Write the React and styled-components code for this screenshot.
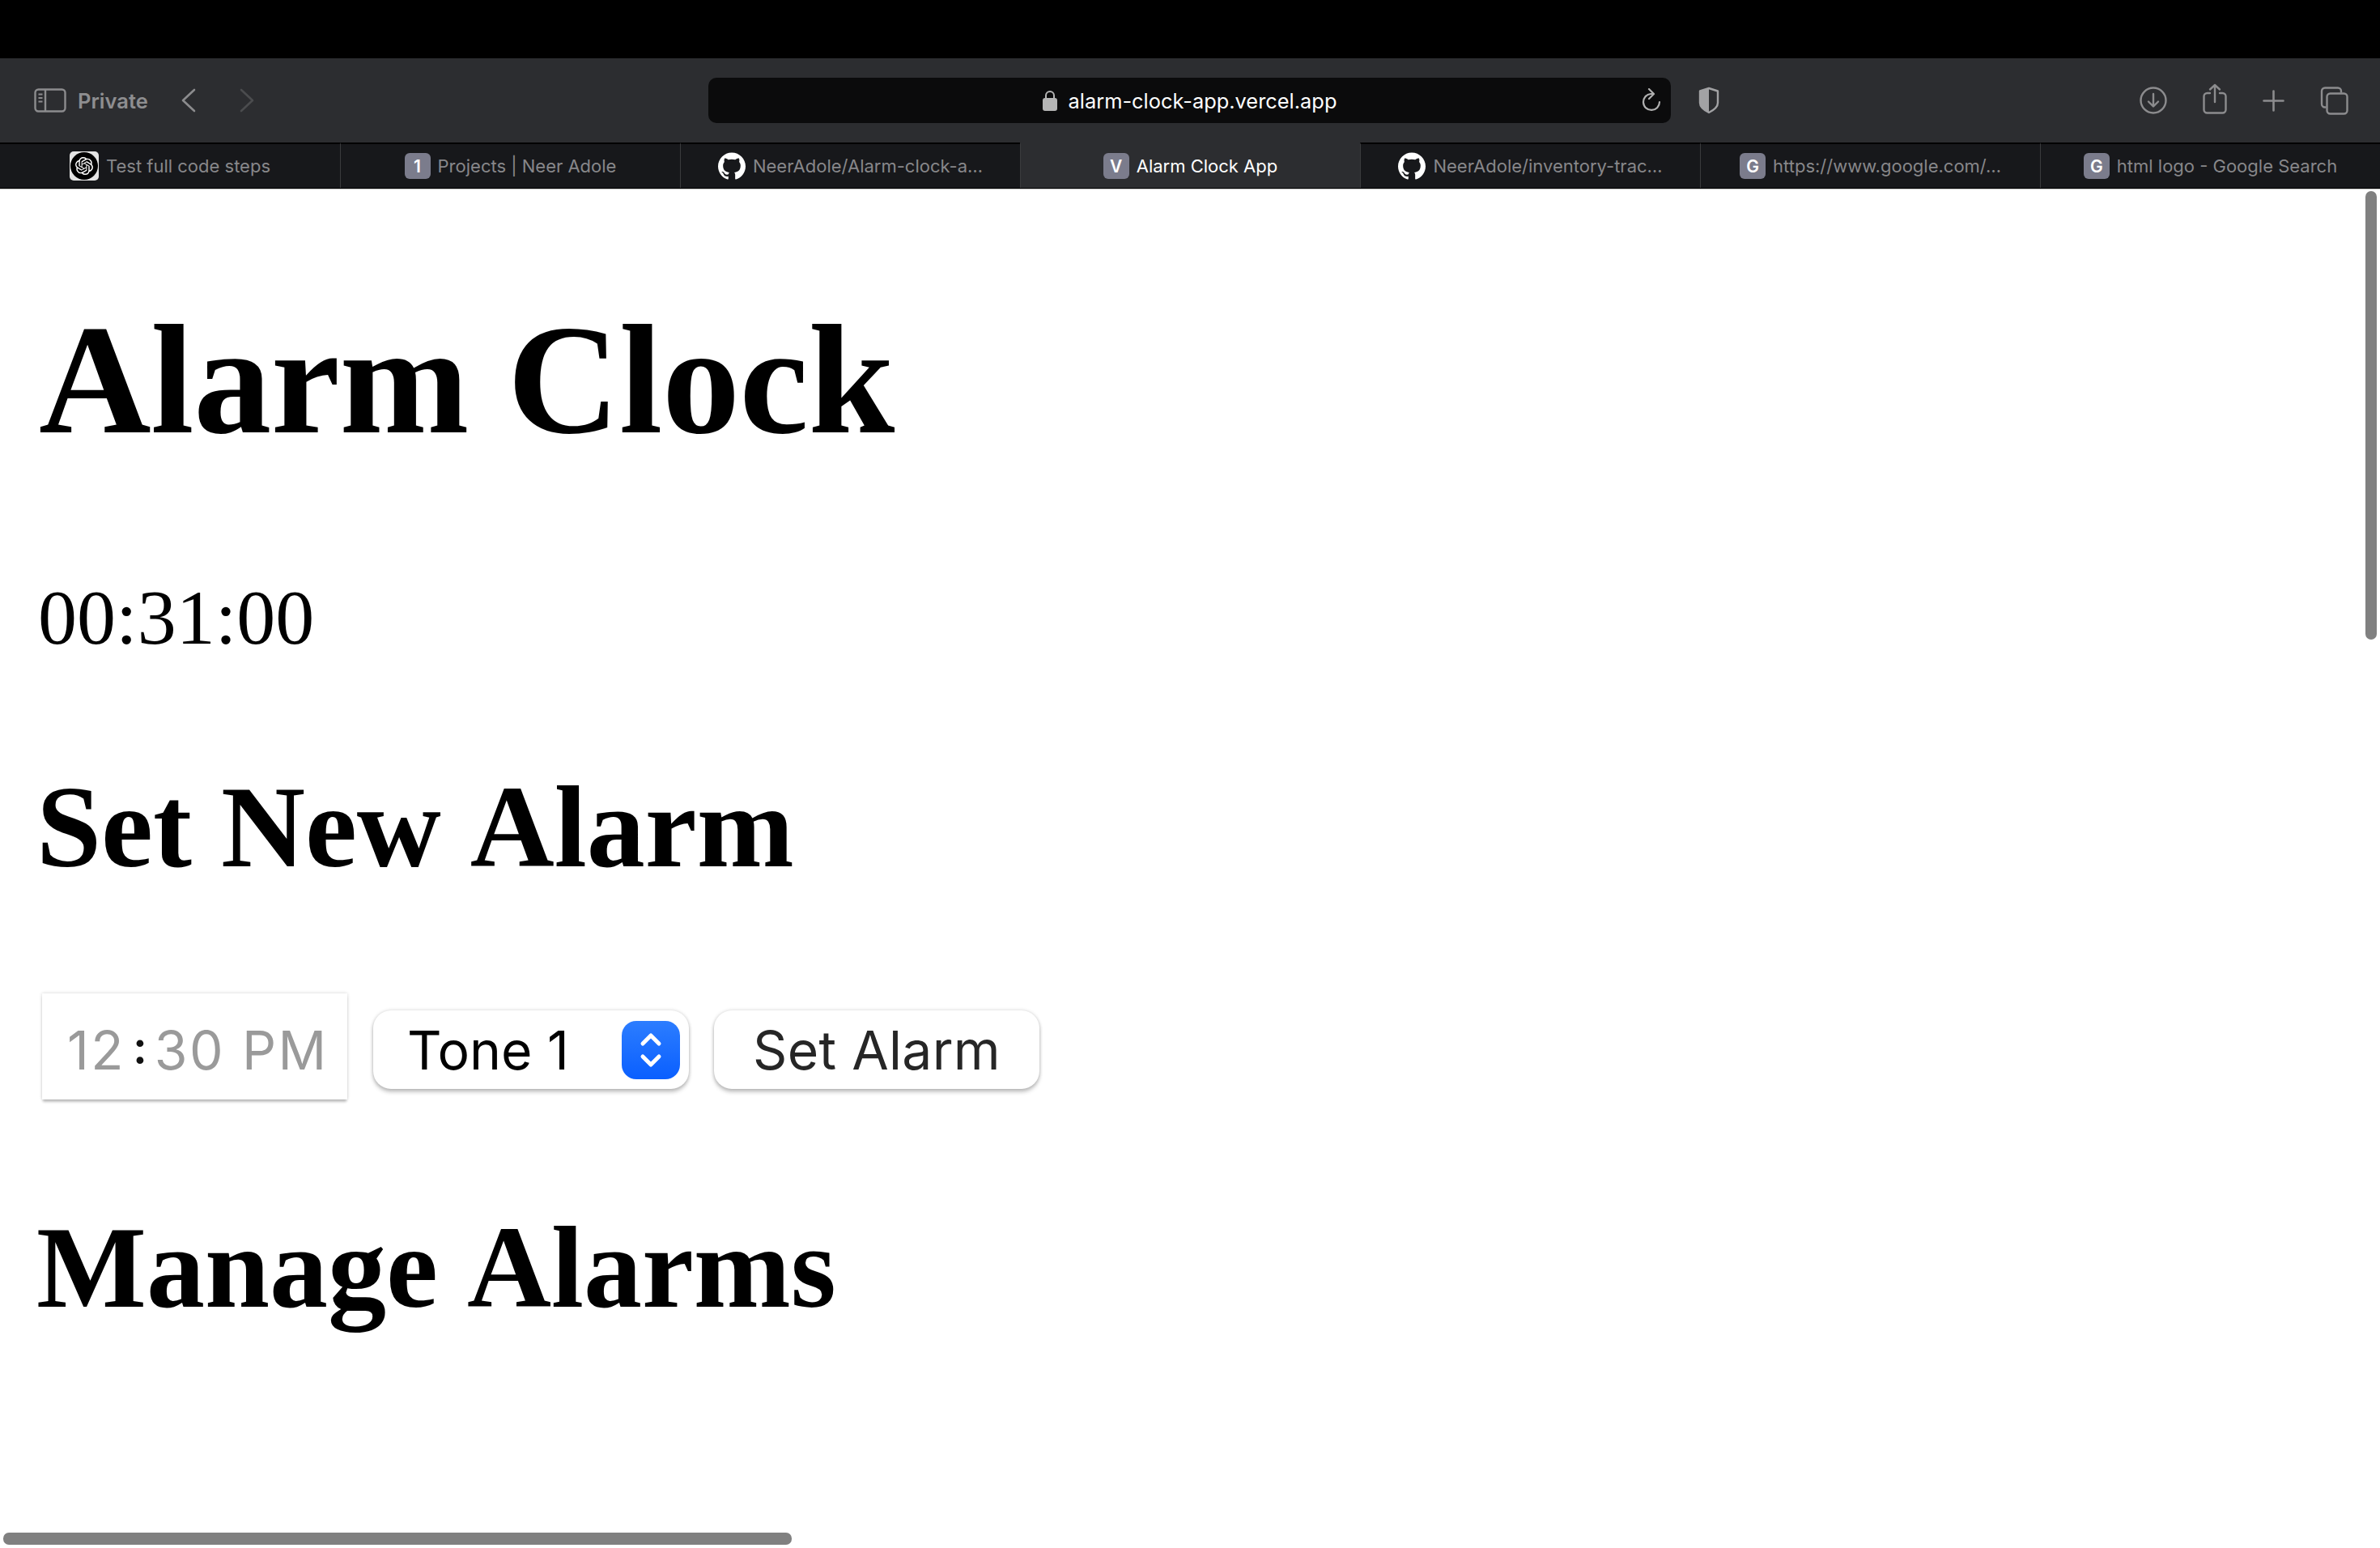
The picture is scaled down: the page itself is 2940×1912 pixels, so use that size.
import React from "react";
import styled, { createGlobalStyle } from "styled-components";
import { SiGithub, SiOpenai } from "react-icons/si";

const GlobalStyle = createGlobalStyle`
  html, body {
    margin: 0;
    padding: 0;
    background: #fff;
    overflow: hidden;
  }
`;

const tabs = [
  { title: "Test full code steps", icon: "openai" },
  { title: "Projects | Neer Adole", icon: "1" },
  { title: "NeerAdole/Alarm-clock-a…", icon: "github" },
  { title: "Alarm Clock App", icon: "V", active: true },
  { title: "NeerAdole/inventory-trac…", icon: "github" },
  { title: "https://www.google.com/…", icon: "G" },
  { title: "html logo - Google Search", icon: "G" }
];

function TabIcon({ icon }) {
  if (icon === "openai") {
    return (
      <OpenAiTile>
        <OpenAiDisc>
          <SiOpenai size={22} color="#fff" />
        </OpenAiDisc>
      </OpenAiTile>
    );
  }
  if (icon === "github") {
    return <SiGithub size={34} color="#fff" />;
  }
  return <LetterTile>{icon}</LetterTile>;
}

export default function App() {
  return (
    <Page>
      <GlobalStyle />
      <TopBar />
      <Toolbar>
        <LeftGroup>
          <svg width="40" height="30" viewBox="0 0 40 30" fill="none" stroke="#8c8c8e" strokeWidth="2.4">
            <rect x="1.5" y="1.5" width="37" height="27" rx="4" />
            <path d="M14 2v26" />
            <path d="M5.5 7.5h5M5.5 12h5M5.5 16.5h5" strokeWidth="2" />
          </svg>
          <PrivateLabel>Private</PrivateLabel>
          <NavIcon>
            <svg width="18" height="30" viewBox="0 0 18 30" fill="none" stroke="#8c8c8e" strokeWidth="2.6" strokeLinecap="round" strokeLinejoin="round">
              <path d="M16 2 2 15l14 13" />
            </svg>
          </NavIcon>
          <NavIcon>
            <svg width="18" height="30" viewBox="0 0 18 30" fill="none" stroke="#4b4c4e" strokeWidth="2.6" strokeLinecap="round" strokeLinejoin="round">
              <path d="m2 2 14 13L2 28" />
            </svg>
          </NavIcon>
        </LeftGroup>
        <UrlBar>
          <span />
          <UrlText>
            <svg width="18" height="26" viewBox="0 0 18 26">
              <path d="M4 11V7a5 5 0 0 1 10 0v4" fill="none" stroke="#b5b5b5" strokeWidth="2" />
              <rect x="0" y="10" width="18" height="16" rx="3" fill="#b5b5b5" />
            </svg>
            alarm-clock-app.vercel.app
          </UrlText>
          <ReloadIcon>
            <svg width="24" height="30" viewBox="0 0 24 30" fill="none" stroke="#b0b0b0" strokeWidth="2.2" strokeLinecap="round" strokeLinejoin="round">
              <path d="M13 7H11A10 10 0 1 0 22 17" />
              <path d="M9 1l6 6-6 6" />
            </svg>
          </ReloadIcon>
        </UrlBar>
        <ShieldIcon>
          <svg width="28" height="34" viewBox="0 0 28 34">
            <path d="M14 2 3 5.500V20c0 5 5 9 11 12 6-3 11-7 11-12V5.500z" fill="none" stroke="#a2a2a4" strokeWidth="2.4" strokeLinejoin="round" />
            <path d="M14 2 3 5.500V20c0 5 5 9 11 12z" fill="#a2a2a4" />
          </svg>
        </ShieldIcon>
        <RightGroup>
          <svg width="34" height="34" viewBox="0 0 34 34" fill="none" stroke="#8c8c8e" strokeWidth="2.4" strokeLinecap="round" strokeLinejoin="round">
            <circle cx="17" cy="17" r="15.500" />
            <path d="M17 9v15M11 18.500l6 6 6-6" />
          </svg>
          <ShareWrap>
            <svg width="30" height="38" viewBox="0 0 30 38" fill="none" stroke="#8c8c8e" strokeWidth="2.4" strokeLinecap="round" strokeLinejoin="round">
              <path d="M9 12H5.500a4 4 0 0 0-4 4v16.500a4 4 0 0 0 4 4h19a4 4 0 0 0 4-4V16a4 4 0 0 0-4-4H21" />
              <path d="M15 23V2M9 7.500 15 2l6 5.500" />
            </svg>
          </ShareWrap>
          <svg width="27" height="27" viewBox="0 0 27 27" fill="none" stroke="#8c8c8e" strokeWidth="2.6" strokeLinecap="round">
            <path d="M13.500 1.500v24M1.500 13.500h24" />
          </svg>
          <svg width="35" height="35" viewBox="0 0 35 35" fill="none" stroke="#8c8c8e" strokeWidth="2.4" strokeLinejoin="round">
            <path d="M7.500 25.500H6a4 4 0 0 1-4-4V5.500a4 4 0 0 1 4-4h16a4 4 0 0 1 4 4v2" />
            <rect x="8.500" y="8.500" width="25" height="25" rx="4" />
          </svg>
        </RightGroup>
      </Toolbar>
      <TabStrip>
        {tabs.map((tab) => (
          <Tab key={tab.title} $active={tab.active}>
            <TabIcon icon={tab.icon} />
            <TabTitle $active={tab.active}>{tab.title}</TabTitle>
          </Tab>
        ))}
      </TabStrip>

      <Main>
        <Title>Alarm Clock</Title>
        <ClockText>00:31:00</ClockText>
        <Subtitle $gap={122}>Set New Alarm</Subtitle>
        <Controls>
          <TimeField>
            <span>12</span>
            <TimeColon>:</TimeColon>
            <span>30&nbsp;PM</span>
          </TimeField>
          <ToneSelect>
            Tone 1
            <Stepper>
              <svg width="30" height="48" viewBox="0 0 30 48" fill="none" stroke="#fff" strokeWidth="5" strokeLinecap="round" strokeLinejoin="round">
                <path d="M5 16 15 6l10 10M5 32l10 10 10-10" />
              </svg>
            </Stepper>
          </ToneSelect>
          <SetButton>Set Alarm</SetButton>
        </Controls>
        <Subtitle $gap={0}>Manage Alarms</Subtitle>
      </Main>

      <VerticalThumb />
      <HorizontalThumb />
    </Page>
  );
}

// ==== STYLES ====
const Page = styled.div`
  position: relative;
  height: 1912px;
  overflow: hidden;
  background: #fff;
  font-family: Inter, "Liberation Sans", sans-serif;
`;

const TopBar = styled.div`
  height: 72px;
  background: #000;
`;

const Toolbar = styled.div`
  height: 104px;
  background: #2c2d30;
  display: flex;
  align-items: center;
`;

const LeftGroup = styled.div`
  width: 875px;
  flex: none;
  box-sizing: border-box;
  padding-left: 42px;
  display: flex;
  align-items: center;
`;

const PrivateLabel = styled.span`
  width: 88px;
  margin-left: 14px;
  color: #8e8e90;
  font-size: 25.5px;
  font-weight: 600;
  white-space: nowrap;
`;

const NavIcon = styled.span`
  display: flex;
  margin-left: 40px;

  & + & {
    margin-left: 54px;
  }
`;

const UrlBar = styled.div`
  width: 1189px;
  height: 56px;
  flex: none;
  box-sizing: border-box;
  padding: 0 12px;
  background: #0b0b0c;
  border-radius: 10px;
  display: grid;
  grid-template-columns: 1fr auto 1fr;
  align-items: center;
`;

const UrlText = styled.div`
  display: flex;
  align-items: center;
  gap: 14px;
  color: #fff;
  font-size: 25.4px;
`;

const ReloadIcon = styled.span`
  display: flex;
  justify-self: end;
`;

const ShieldIcon = styled.span`
  display: flex;
  margin-left: 33px;
`;

const RightGroup = styled.div`
  margin-left: auto;
  padding-right: 39px;
  display: flex;
  align-items: center;
  gap: 44px;
`;

const ShareWrap = styled.span`
  display: flex;
  margin-top: -4px;
`;

const TabStrip = styled.div`
  height: 57px;
  box-sizing: border-box;
  display: grid;
  grid-template-columns: repeat(7, 1fr);
  background: #17181b;
  border-bottom: 1px solid #000;
  box-shadow: 0 1px 0 #c8c8c8;
`;

const Tab = styled.div`
  display: flex;
  align-items: center;
  justify-content: center;
  gap: 9px;
  box-sizing: border-box;
  background: ${(p) => (p.$active ? "#2c2d30" : "#17181b")};
  border-top: 2px solid ${(p) => (p.$active ? "#2c2d30" : "#000")};
  border-left: 1px solid #3a3b3d;

  &:first-child {
    border-left: none;
  }
`;

const TabTitle = styled.span`
  color: ${(p) => (p.$active ? "#fff" : "#87878a")};
  font-size: 22px;
  white-space: nowrap;
`;

const OpenAiTile = styled.div`
  width: 36px;
  height: 36px;
  background: #e4e4e4;
  border-radius: 5px;
  display: flex;
  align-items: center;
  justify-content: center;
`;

const OpenAiDisc = styled.div`
  width: 34px;
  height: 34px;
  background: #000;
  border-radius: 50%;
  display: flex;
  align-items: center;
  justify-content: center;
`;

const LetterTile = styled.div`
  width: 32px;
  height: 32px;
  background: #7b7c8c;
  border-radius: 6px;
  color: #fff;
  font-size: 21px;
  font-weight: 600;
  display: flex;
  align-items: center;
  justify-content: center;
`;

const Main = styled.main`
  padding: 126px 0 0 45px;
  font-family: "Liberation Serif", serif;
  color: #000;
`;

const Title = styled.h1`
  margin: 0 0 128px 3px;
  font-size: 192px;
  line-height: 221px;
  font-weight: 700;
  letter-spacing: -0.4px;
`;

const ClockText = styled.p`
  margin: 0 0 121px 2px;
  font-size: 96px;
  line-height: 110px;
`;

const Subtitle = styled.h2`
  margin: 0 0 ${(p) => p.$gap}px;
  font-size: 144px;
  line-height: 166px;
  font-weight: 700;
  font-kerning: none;
`;

const Controls = styled.div`
  height: 131px;
  margin-bottom: 125px;
  padding-left: 7px;
  display: flex;
  align-items: center;
  font-family: Inter, "Liberation Sans", sans-serif;
  font-size: 66px;
`;

const TimeField = styled.div`
  width: 377px;
  height: 131px;
  box-sizing: border-box;
  padding: 9px 0 0 31px;
  display: flex;
  align-items: center;
  color: #9a9a9a;
  background: #fff;
  letter-spacing: 2.4px;
  box-shadow: 0 0 4px rgba(0, 0, 0, 0.18), 0 4px 3px -1px rgba(0, 0, 0, 0.22);
`;

const TimeColon = styled.span`
  margin: -6px 9px 0;
  color: #111;
  font-size: 56px;
  font-weight: 600;
  letter-spacing: 0;
`;

const ToneSelect = styled.div`
  width: 390px;
  height: 97px;
  margin: 8px 0 0 32px;
  box-sizing: border-box;
  padding: 0 11px 0 42px;
  display: flex;
  align-items: center;
  justify-content: space-between;
  color: #000;
  background: #fff;
  border-radius: 22px;
  box-shadow: 0 0 4px rgba(0, 0, 0, 0.18), 0 4px 5px rgba(0, 0, 0, 0.22);
`;

const Stepper = styled.div`
  width: 72px;
  height: 72px;
  border-radius: 18px;
  background: linear-gradient(#2c7dff, #0a5fff);
  display: flex;
  align-items: center;
  justify-content: center;
`;

const SetButton = styled.button`
  width: 402px;
  height: 97px;
  margin: 8px 0 0 31px;
  padding: 0;
  border: none;
  border-radius: 22px;
  color: #262626;
  background: #fff;
  font: inherit;
  letter-spacing: 0.3px;
  box-shadow: 0 0 4px rgba(0, 0, 0, 0.18), 0 4px 5px rgba(0, 0, 0, 0.22);
`;

const VerticalThumb = styled.div`
  position: absolute;
  top: 236px;
  right: 4px;
  width: 14px;
  height: 554px;
  border-radius: 7px;
  background: #808080;
`;

const HorizontalThumb = styled.div`
  position: absolute;
  left: 4px;
  bottom: 4px;
  width: 974px;
  height: 15px;
  border-radius: 7px;
  background: #808080;
`;
